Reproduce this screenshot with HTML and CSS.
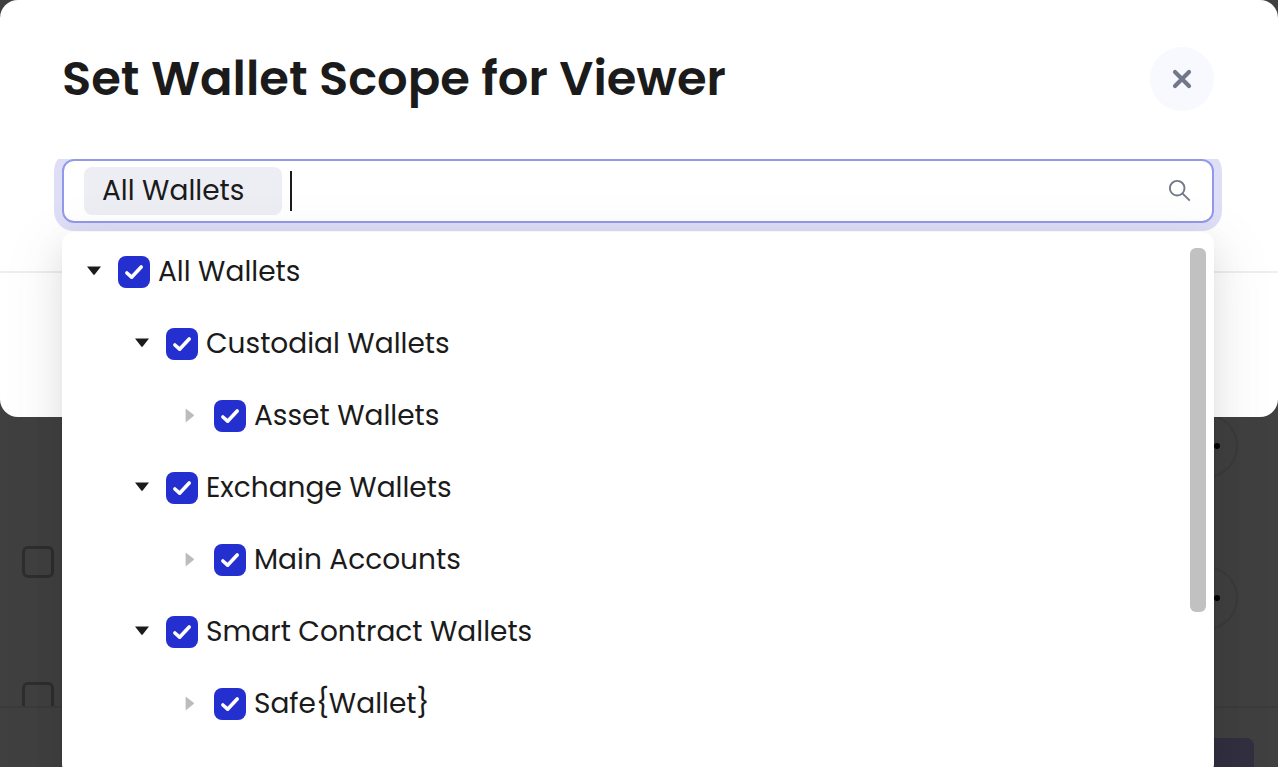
FILE: index.html
```html
<!DOCTYPE html>
<html lang="en">
<head>
<meta charset="utf-8">
<meta name="viewport" content="width=device-width, initial-scale=1">
<title>Set Wallet Scope for Viewer</title>
<link rel="stylesheet" href="styles.css">
</head>
<body>
<svg class="sprite" aria-hidden="true">
  <symbol id="check" viewBox="0 0 32 32"><path d="M8.9 17 L13.6 21.2 L23.2 11" fill="none" stroke="#fff" stroke-width="3.6" stroke-linecap="round" stroke-linejoin="round"/></symbol>
  <symbol id="down" viewBox="0 0 14 14"><path d="M0 1.5 H14 L7.7 9.6 Q7 10.4 6.3 9.6 Z"/></symbol>
  <symbol id="right" viewBox="0 0 14 14"><path d="M2.6 -0.6 V13.4 L10.7 7 Q11.4 6.4 10.7 5.8 Z"/></symbol>
</svg>

<div class="page" inert>
  <div class="page-list">
    <div class="page-checks">
      <input class="page-check" type="checkbox" aria-label="Select row 1">
      <input class="page-check" type="checkbox" aria-label="Select row 2">
    </div>
    <div class="page-actions">
      <button class="more" type="button" aria-label="More actions"><i></i><i></i><i></i></button>
      <button class="more" type="button" aria-label="More actions"><i></i><i></i><i></i></button>
    </div>
  </div>
  <div class="page-footer"><button class="page-submit" type="button" aria-label="Submit"></button></div>
</div>

<div class="modal" role="dialog" aria-labelledby="title">
  <header class="modal-header">
    <h1 class="title" id="title">Set Wallet Scope for Viewer</h1>
    <button class="close" type="button" aria-label="Close">
      <svg width="20" height="20" viewBox="0 0 20 20"><path d="M3 3 L17 17 M17 3 L3 17" stroke="#727889" stroke-width="4.2" stroke-linecap="round"/></svg>
    </button>
  </header>
  <div class="modal-body">
    <div class="field-area">
      <div class="field">
        <span class="chip">All Wallets</span>
        <span class="caret"></span>
        <input class="search" type="text" aria-label="Search wallets">
        <svg width="24" height="24" viewBox="0 0 24 24" fill="none" stroke="#727889" stroke-width="1.9"><circle cx="9.2" cy="9.2" r="7.3"/><path d="M14.4 14.4 L21.8 21.6"/></svg>
      </div>
    </div>
    <div class="dropdown">
      <ul class="tree">
        <li class="row"><button class="toggle" type="button" aria-label="Collapse"><svg class="arrow"><use href="#down"/></svg></button><label class="option"><span class="box"><input type="checkbox" checked><svg><use href="#check"/></svg></span>All Wallets</label></li>
        <li class="row level-2"><button class="toggle" type="button" aria-label="Collapse"><svg class="arrow"><use href="#down"/></svg></button><label class="option"><span class="box"><input type="checkbox" checked><svg><use href="#check"/></svg></span>Custodial Wallets</label></li>
        <li class="row level-3"><button class="toggle" type="button" aria-label="Expand"><svg class="arrow muted"><use href="#right"/></svg></button><label class="option"><span class="box"><input type="checkbox" checked><svg><use href="#check"/></svg></span>Asset Wallets</label></li>
        <li class="row level-2"><button class="toggle" type="button" aria-label="Collapse"><svg class="arrow"><use href="#down"/></svg></button><label class="option"><span class="box"><input type="checkbox" checked><svg><use href="#check"/></svg></span>Exchange Wallets</label></li>
        <li class="row level-3"><button class="toggle" type="button" aria-label="Expand"><svg class="arrow muted"><use href="#right"/></svg></button><label class="option"><span class="box"><input type="checkbox" checked><svg><use href="#check"/></svg></span>Main Accounts</label></li>
        <li class="row level-2"><button class="toggle" type="button" aria-label="Collapse"><svg class="arrow"><use href="#down"/></svg></button><label class="option"><span class="box"><input type="checkbox" checked><svg><use href="#check"/></svg></span>Smart Contract Wallets</label></li>
        <li class="row level-3"><button class="toggle" type="button" aria-label="Expand"><svg class="arrow muted"><use href="#right"/></svg></button><label class="option"><span class="box"><input type="checkbox" checked><svg><use href="#check"/></svg></span>Safe{Wallet}</label></li>
      </ul>
      <div class="scrollbar"><div class="thumb"></div></div>
    </div>
  </div>
  <footer class="modal-footer"></footer>
</div>
</body>
</html>
```

FILE: styles.css
```css
* { box-sizing: border-box; }

body {
  margin: 0;
  height: 100vh;
  overflow: hidden;
  background: #404040;
  color: #1b1b1b;
  font: 28px/40px Poppins, Inter, sans-serif;
}

button { padding: 0; border: 0; background: none; }

.sprite { display: none; }

/* dimmed page behind the dialog */
.page { display: flex; flex-direction: column; height: 100vh; }

.page-list {
  flex: 1;
  min-height: 0;
  overflow: hidden;
  display: flex;
  justify-content: space-between;
  padding: 0 40px 0 22px;
}

.page-checks { display: flex; flex-direction: column; gap: 104px; padding-top: 546px; }

.page-check {
  appearance: none;
  flex: none;
  width: 32px;
  height: 32px;
  margin: 0;
  border: 3px solid #2e2e30;
  border-radius: 6px;
}

.page-actions { display: flex; flex-direction: column; gap: 88px; padding-top: 414px; }

.more {
  display: flex;
  flex: none;
  align-items: center;
  justify-content: center;
  gap: 5px;
  width: 64px;
  height: 64px;
  border: 2px solid #3b3b3b;
  border-radius: 50%;
}

.more i { width: 6px; height: 6px; border-radius: 50%; background: #000; }

.page-footer {
  display: flex;
  justify-content: flex-end;
  height: 61px;
  padding: 30px 24px 0;
  border-top: 2px solid #3b3b3b;
}

.page-submit { width: 160px; height: 48px; border-radius: 8px; background: #323040; }

/* dialog */
.modal {
  position: absolute;
  top: 0;
  left: 0;
  right: 0;
  border-radius: 18px;
  background: #fff;
}

.modal-header {
  display: flex;
  align-items: center;
  justify-content: space-between;
  padding: 47px 64px 48px 62px;
}

.title { margin: 0; font-size: 48px; line-height: 64px; font-weight: 600; }

.close {
  display: grid;
  place-items: center;
  width: 64px;
  height: 64px;
  border-radius: 50%;
  background: #f8f9fe;
}

.modal-body { position: relative; }

.field-area {
  overflow: hidden;
  padding: 0 64px 48px 62px;
  border-bottom: 2px solid #eeeef2;
}

.field {
  display: flex;
  align-items: center;
  gap: 8px;
  height: 64px;
  padding: 0 20px;
  border: 2px solid #9299eb;
  border-radius: 12px;
  box-shadow: 0 0 0 8px #dedff7;
}

.chip {
  width: 198px;
  height: 48px;
  padding: 0 18px;
  border-radius: 8px;
  background: #edeef4;
  line-height: 48px;
}

.caret { width: 2px; height: 40px; background: #1b1b1b; }

.search {
  flex: 1;
  min-width: 0;
  height: 40px;
  padding: 0;
  border: 0;
  outline: 0;
  background: none;
  font: inherit;
}

.dropdown {
  position: absolute;
  top: 73px;
  left: 62px;
  right: 64px;
  display: flex;
  padding: 4px 8px 36px;
  border-radius: 12px;
  background: #fff;
  box-shadow:
    0 12px 32px rgba(0, 0, 0, .08),
    0 6px 12px -8px rgba(0, 0, 0, .12),
    0 18px 56px 16px rgba(0, 0, 0, .05);
}

.tree { flex: 1; margin: 0; padding: 0; list-style: none; }

.row { display: flex; align-items: center; height: 72px; }
.level-2 { padding-left: 48px; }
.level-3 { padding-left: 96px; }

.toggle { display: grid; place-items: center; width: 48px; height: 48px; }
.arrow { width: 14px; height: 14px; overflow: visible; fill: #1b1b1b; }
.muted { fill: #bbbbc0; }
#right { overflow: visible; }

.option { display: flex; align-items: center; gap: 8px; }

.box { display: grid; width: 32px; height: 32px; }
.box > * { grid-area: 1 / 1; width: 32px; height: 32px; margin: 0; }
.box input { appearance: none; border-radius: 8px; background: #232fcf; }
.box svg { pointer-events: none; }

.scrollbar { padding-top: 12px; }
.thumb { width: 16px; height: 364px; border-radius: 6px; background: #c1c1c1; }

.modal-footer { height: 144px; }
```
